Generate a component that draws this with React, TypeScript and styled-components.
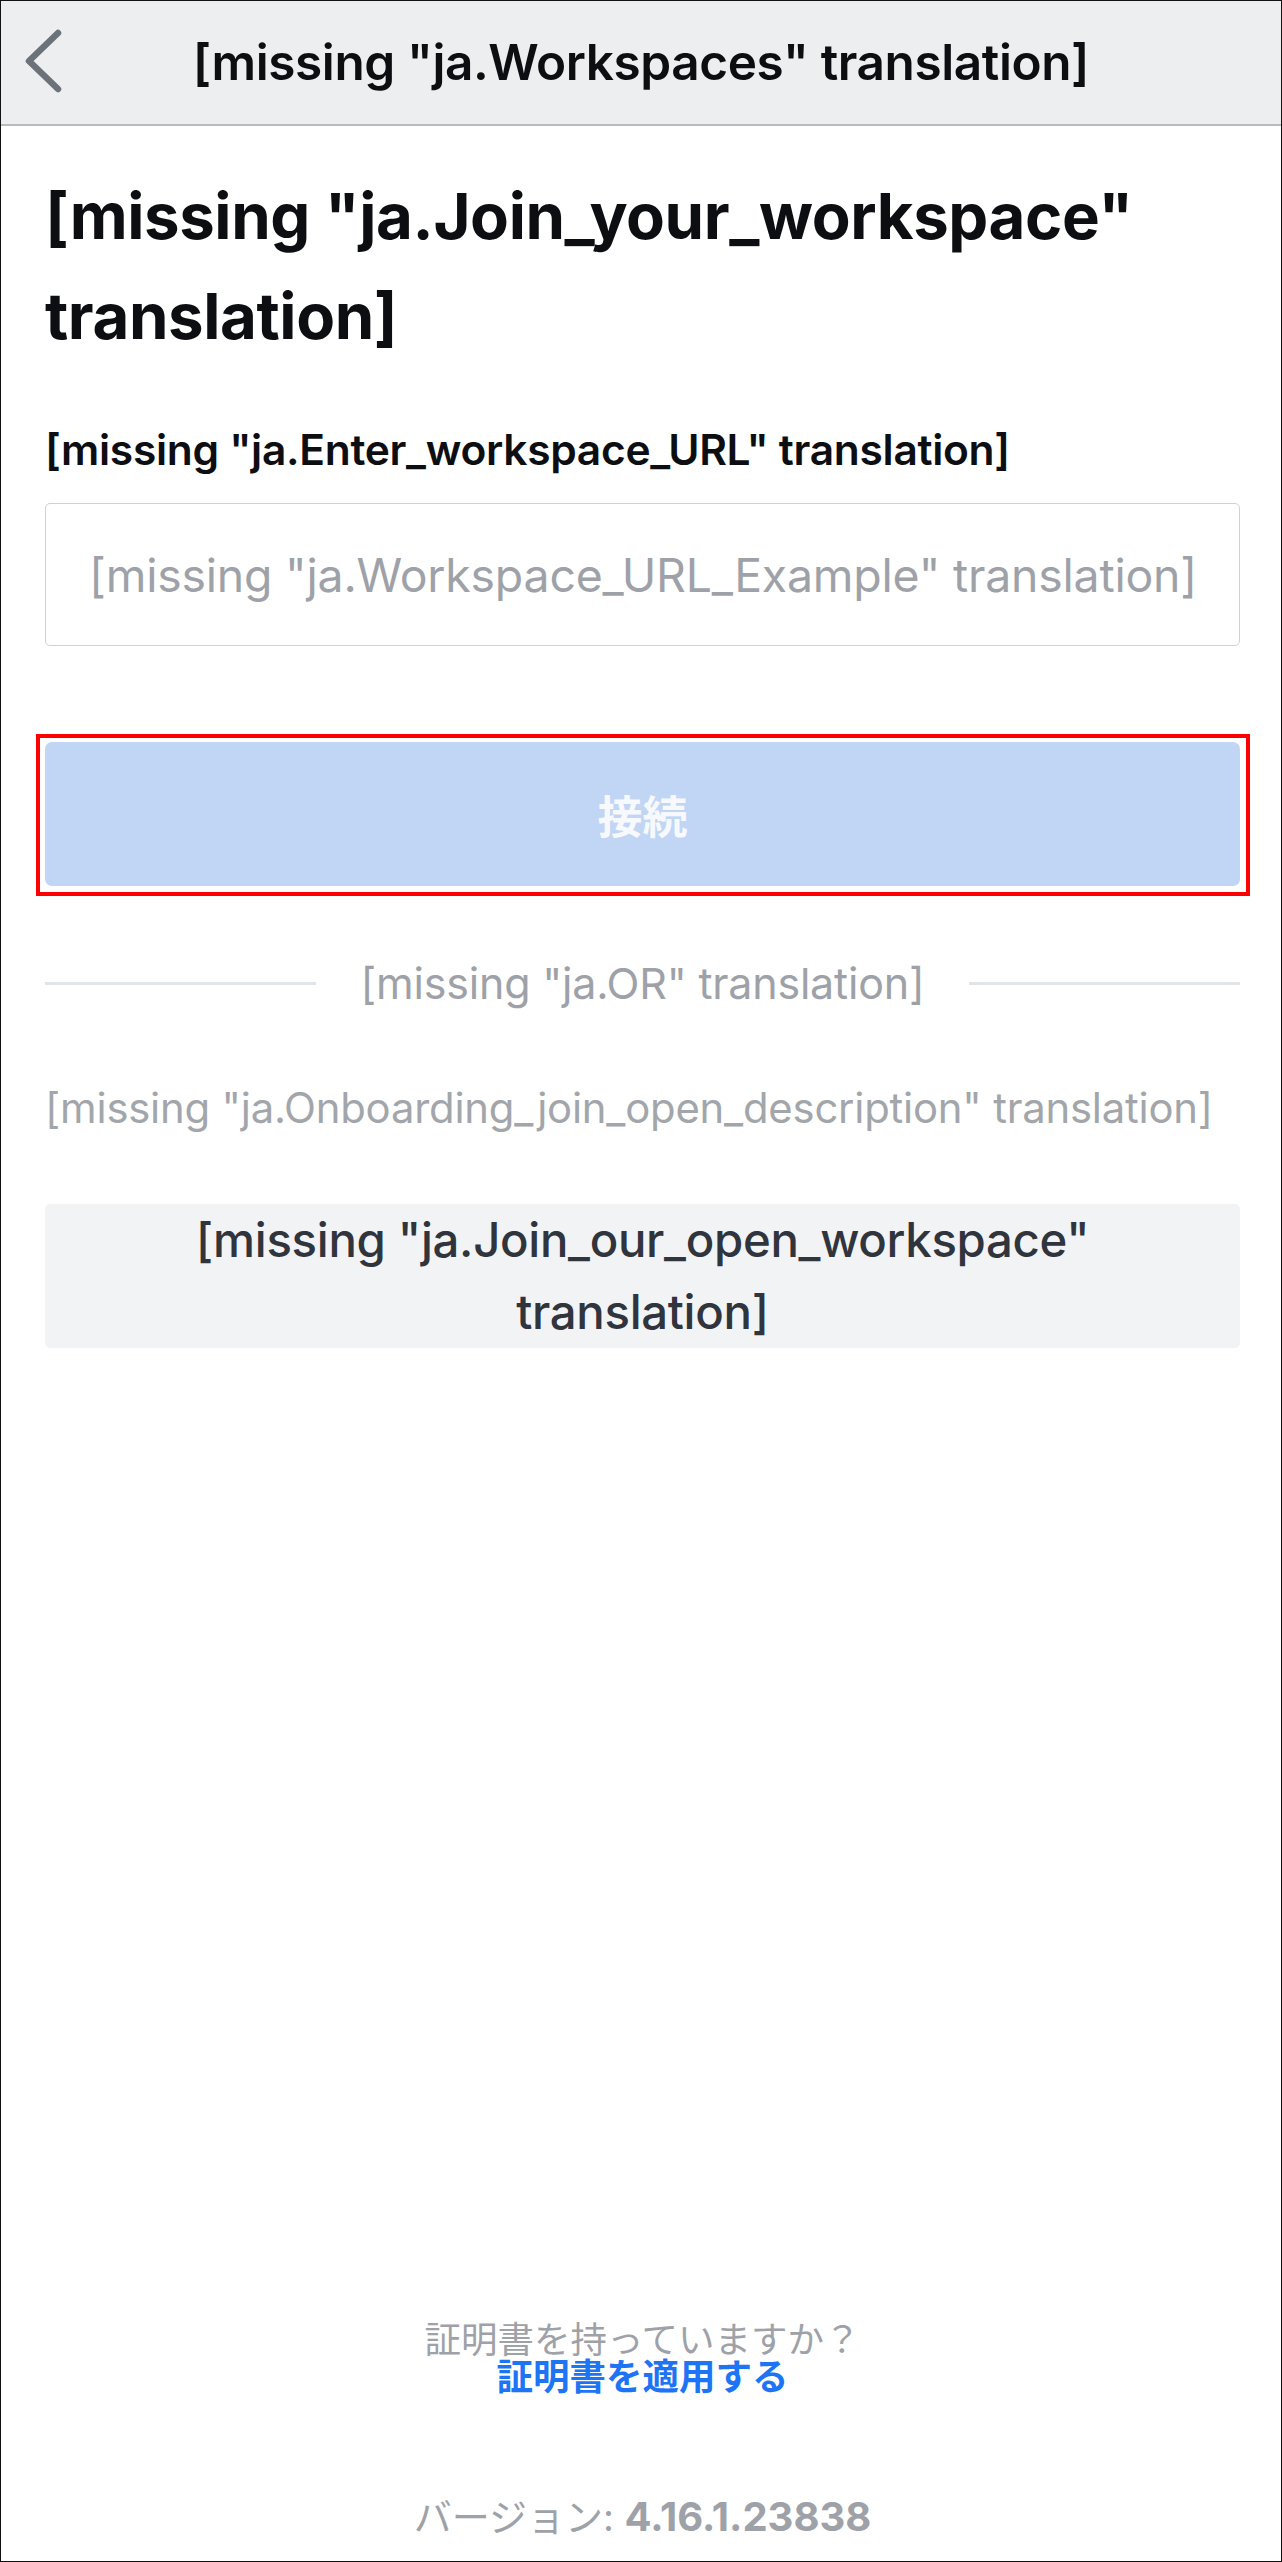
import React from 'react';
import styled, { createGlobalStyle } from 'styled-components';

const GlobalStyle = createGlobalStyle`
  html, body {
    margin: 0;
    padding: 0;
    background: #ffffff;
  }
  body {
    font-family: Inter, "Noto Sans CJK JP", sans-serif;
  }
  * {
    box-sizing: border-box;
  }
`;

const Frame = styled.div`
  width: 1282px;
  min-height: 2562px;
  border: 1.5px solid #111;
  display: flex;
  flex-direction: column;
  background: #ffffff;
`;

const Header = styled.header`
  height: 125px;
  flex: none;
  background: #edeef0;
  border-bottom: 2px solid #b9bbbe;
  display: flex;
  align-items: center;
  justify-content: center;
  position: relative;
`;

const BackButton = styled.button`
  position: absolute;
  left: 20px;
  top: 26px;
  width: 46px;
  height: 68px;
  padding: 0;
  border: 0;
  background: none;
  display: flex;
  align-items: center;
  justify-content: center;
`;

const HeaderTitle = styled.h1`
  margin: 0 0 2px;
  font-size: 49.5px;
  font-weight: 600;
  color: #0d0e12;
  letter-spacing: -0.4px;
  white-space: nowrap;
`;

const Content = styled.main`
  flex: 1;
  display: flex;
  flex-direction: column;
  padding: 0 41px 0 44px;
`;

const Title = styled.h2`
  margin: 40px 0 0;
  font-size: 63.5px;
  line-height: 100px;
  font-weight: 700;
  color: #0d0e12;
  letter-spacing: -0.4px;
`;

const Label = styled.label`
  margin-top: 62px;
  font-size: 42.5px;
  line-height: 44px;
  font-weight: 600;
  color: #0d0e12;
  letter-spacing: -0.3px;
  white-space: nowrap;
`;

const Input = styled.input`
  margin-top: 31px;
  height: 143px;
  width: 100%;
  border: 1.5px solid #cfd1d4;
  border-radius: 5px;
  padding: 0 12px 0 43px;
  font-family: inherit;
  font-size: 46.4px;
  letter-spacing: -0.2px;
  color: #2f343d;
  outline: none;
  &::placeholder {
    color: #9ea2a8;
  }
`;

const Highlight = styled.div`
  margin: 88px -10px 0 -9px;
  border: 4px solid #ff0000;
  padding: 4px 6px 6px 5px;
`;

const PrimaryButton = styled.button`
  display: block;
  height: 144px;
  width: 100%;
  border: 0;
  border-radius: 7px;
  background: #c1d5f5;
  color: #f7f9fe;
  font-family: inherit;
  font-size: 45px;
  font-weight: 700;
`;

const Divider = styled.div`
  margin-top: 65px;
  display: flex;
  align-items: center;
  gap: 45px;
`;

const Rule = styled.div`
  flex: 1;
  height: 3px;
  background: #e1e5e8;
`;

const DividerText = styled.span`
  font-size: 43px;
  line-height: 44px;
  color: #9ea2a8;
  letter-spacing: -0.2px;
`;

const Description = styled.p`
  margin: 81px 0 0;
  font-size: 41.8px;
  line-height: 44px;
  color: #a2a6ab;
  letter-spacing: -0.2px;
  white-space: nowrap;
`;

const SecondaryButton = styled.button`
  margin-top: 74px;
  height: 144px;
  width: 100%;
  border: 0;
  border-radius: 5px;
  background: #f2f3f5;
  color: #2f343d;
  font-family: inherit;
  font-size: 47.3px;
  line-height: 72px;
  font-weight: 500;
  letter-spacing: -0.3px;
  padding: 0 100px;
`;

const Footer = styled.footer`
  margin-top: auto;
  display: flex;
  flex-direction: column;
  align-items: center;
  padding-bottom: 24px;
`;

const FooterQuestion = styled.span`
  font-size: 36.5px;
  line-height: 37px;
  color: #9ea2a8;
`;

const FooterLink = styled.a`
  font-size: 36.5px;
  line-height: 37px;
  font-weight: 700;
  color: #1d74f5;
  text-decoration: none;
`;

const Version = styled.div`
  margin-top: 101px;
  font-size: 38px;
  line-height: 40px;
  color: #9ea2a8;
  b {
    font-weight: 700;
    font-size: 40px;
  }
`;

const ChevronLeft = () => (
  <svg width="46" height="68" viewBox="0 0 46 68">
    <path
      d="M37 6 L8 34 L37 62"
      fill="none"
      stroke="#6c727a"
      strokeWidth="6.5"
      strokeLinecap="round"
      strokeLinejoin="round"
    />
  </svg>
);

export default function App() {
  return (
    <>
      <GlobalStyle />
      <Frame>
        <Header>
          <BackButton aria-label="back">
            <ChevronLeft />
          </BackButton>
          <HeaderTitle>[missing "ja.Workspaces" translation]</HeaderTitle>
        </Header>

        <Content>
          <Title>
            [missing "ja.Join_your_workspace"
            <br />
            translation]
          </Title>

          <Label>[missing "ja.Enter_workspace_URL" translation]</Label>
          <Input placeholder={'[missing "ja.Workspace_URL_Example" translation]'} />

          <Highlight>
            <PrimaryButton disabled>接続</PrimaryButton>
          </Highlight>

          <Divider>
            <Rule />
            <DividerText>[missing "ja.OR" translation]</DividerText>
            <Rule />
          </Divider>

          <Description>
            [missing "ja.Onboarding_join_open_description" translation]
          </Description>

          <SecondaryButton>
            [missing "ja.Join_our_open_workspace" translation]
          </SecondaryButton>

          <Footer>
            <FooterQuestion>証明書を持っていますか？</FooterQuestion>
            <FooterLink href="#">証明書を適用する</FooterLink>
            <Version>
              バージョン: <b>4.16.1.23838</b>
            </Version>
          </Footer>
        </Content>
      </Frame>
    </>
  );
}
